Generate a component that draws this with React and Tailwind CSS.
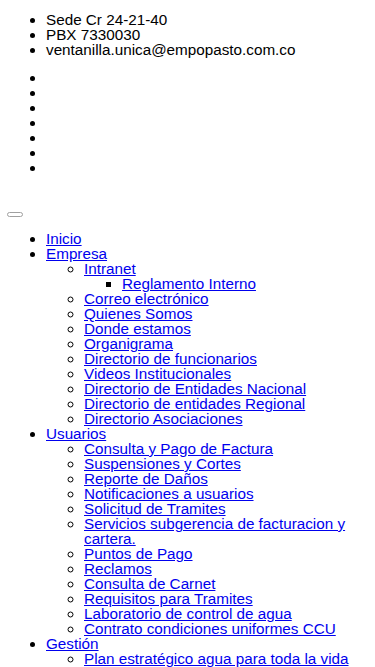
const contacto = ["Sede Cr 24-21-40", "PBX 7330030", "ventanilla.unica@empopasto.com.co"];

const menu = [
  { label: "Inicio" },
  {
    label: "Empresa",
    items: [
      { label: "Intranet", items: [{ label: "Reglamento Interno" }] },
      { label: "Correo electrónico" },
      { label: "Quienes Somos" },
      { label: "Donde estamos" },
      { label: "Organigrama" },
      { label: "Directorio de funcionarios" },
      { label: "Videos Institucionales" },
      { label: "Directorio de Entidades Nacional" },
      { label: "Directorio de entidades Regional" },
      { label: "Directorio Asociaciones" },
    ],
  },
  {
    label: "Usuarios",
    items: [
      { label: "Consulta y Pago de Factura" },
      { label: "Suspensiones y Cortes" },
      { label: "Reporte de Daños" },
      { label: "Notificaciones a usuarios" },
      { label: "Solicitud de Tramites" },
      { label: "Servicios subgerencia de facturacion y cartera." },
      { label: "Puntos de Pago" },
      { label: "Reclamos" },
      { label: "Consulta de Carnet" },
      { label: "Requisitos para Tramites" },
      { label: "Laboratorio de control de agua" },
      { label: "Contrato condiciones uniformes CCU" },
    ],
  },
  {
    label: "Gestión",
    items: [{ label: "Plan estratégico agua para toda la vida" }],
  },
];

const listStyles = ["list-disc", "list-[circle]", "list-[square]"];

function MenuList({ items, depth = 0 }) {
  return (
    <ul className={[listStyles[depth], "pl-[38px]"].join(" ")}>
      {items.map((item) => (
        <li key={item.label}>
          <a href="#" className="text-[#0000ee] underline">
            {item.label}
          </a>
          {item.items && <MenuList items={item.items} depth={depth + 1} />}
        </li>
      ))}
    </ul>
  );
}

export default function App() {
  return (
    <div className="min-h-[667px] bg-white px-[8px] pt-[12px] pb-4 font-['Liberation_Sans',Arial,sans-serif] text-[15.25px] leading-[15px] text-black">
      <ul className="list-disc pl-[38px]">
        {contacto.map((line) => (
          <li key={line}>{line}</li>
        ))}
      </ul>

      <ul className="mt-[13px] list-disc pl-[38px]">
        {Array.from({ length: 7 }).map((_, i) => (
          <li key={i}>{"\u00a0"}</li>
        ))}
      </ul>

      <button
        type="button"
        className="mt-[37px] -ml-[1px] block h-[5px] w-[16px] rounded-[3px] border border-[#a0a0a0] bg-white"
      />

      <nav className="mt-[14px]">
        <MenuList items={menu} />
      </nav>
    </div>
  );
}
